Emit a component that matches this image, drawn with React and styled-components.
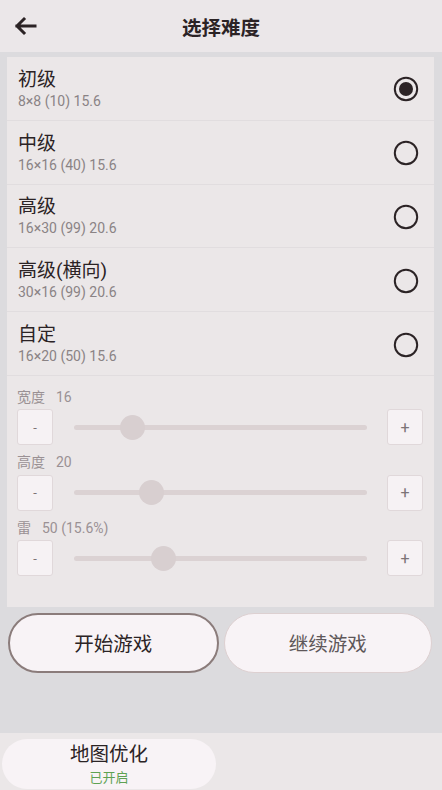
import React from "react";
import styled, { createGlobalStyle } from "styled-components";

const Global = createGlobalStyle`
  html, body { margin: 0; padding: 0; background: #dcdbde; }
  body { font-family: Roboto, "Noto Sans CJK SC", sans-serif; }
  * { box-sizing: border-box; }
`;

const Page = styled.div`
  width: 442px;
  height: 790px;
  display: flex;
  flex-direction: column;
  background: #dcdbde;
  overflow: hidden;
`;

const Header = styled.div`
  height: 52px;
  flex: none;
  background: #ebe7e9;
  display: grid;
  grid-template-columns: 60px 1fr 60px;
  align-items: center;
`;

const Back = styled.div`
  display: flex;
  align-items: center;
  padding-left: 13px;
`;

const Title = styled.div`
  text-align: center;
  font-family: "Noto Sans CJK SC", sans-serif;
  font-weight: 700;
  font-size: 19.5px;
  color: #2b2325;
`;

const Card = styled.div`
  margin: 5px 8px 0 7px;
  background: #ebe7e8;
  display: flex;
  flex-direction: column;
`;

const Row = styled.div`
  height: 63.8px;
  display: flex;
  align-items: center;
  justify-content: space-between;
  padding: 2px 15px 0 11px;
  border-bottom: 1.5px solid #e1dddf;
`;

const RowText = styled.div`
  display: flex;
  flex-direction: column;
  gap: 1px;
`;

const RowTitle = styled.div`
  font-family: Roboto, "Noto Sans CJK SC", sans-serif;
  font-size: 19px;
  line-height: 22px;
  color: #2b2325;
`;

const RowSub = styled.div`
  font-family: Roboto, "Noto Sans CJK SC", sans-serif;
  font-size: 14px;
  line-height: 18px;
  color: #8a8385;
`;

const Sliders = styled.div`
  height: 231px;
  padding: 11px 11px 0 10px;
  display: flex;
  flex-direction: column;
`;

const SliderBlock = styled.div`
  display: flex;
  flex-direction: column;
  margin-bottom: 6.5px;
`;

const SliderLabel = styled.div`
  font-family: Roboto, "Noto Sans CJK SC", sans-serif;
  font-size: 14px;
  line-height: 20px;
  color: #9a9194;
  height: 22px;
  display: flex;
  gap: 11px;
`;

const SliderRow = styled.div`
  display: flex;
  align-items: center;
  height: 37px;
`;

const StepBtn = styled.div`
  width: 36px;
  height: 36px;
  flex: none;
  background: #f6f2f4;
  border: 1px solid #e0d8da;
  border-radius: 3px;
  display: flex;
  align-items: center;
  justify-content: center;
  font-family: Roboto, sans-serif;
  font-size: ${(p) => (p.$plus ? "16px" : "13px")};
  color: #7c7476;
`;

const Track = styled.div`
  position: relative;
  flex: 1;
  margin: 0 20px 0 21px;
  height: 5px;
  border-radius: 3px;
  background: #dbd2d3;
`;

const Thumb = styled.div`
  position: absolute;
  top: 50%;
  width: 25px;
  height: 25px;
  margin-left: -12.5px;
  margin-top: -12.5px;
  border-radius: 50%;
  background: #d8cfd0;
`;

const Buttons = styled.div`
  display: flex;
  gap: 5px;
  padding: 6px 10px 0 8px;
`;

const BigBtn = styled.div`
  flex: 1;
  height: 60px;
  border-radius: 30px;
  background: #f8f3f6;
  border: ${(p) => (p.$primary ? "2px solid #8b7c7b" : "1.5px solid #ddd0d1")};
  display: flex;
  align-items: center;
  justify-content: center;
  font-family: "Noto Sans CJK SC", sans-serif;
  font-size: 19.5px;
  color: ${(p) => (p.$primary ? "#2b2325" : "#5e5759")};
`;

const BottomBar = styled.div`
  margin-top: auto;
  height: 57px;
  background: #ebe7e8;
  padding: 6px 0 0 2px;
`;

const Pill = styled.div`
  width: 214px;
  height: 50px;
  border-radius: 25px;
  background: #f8f3f6;
  display: flex;
  flex-direction: column;
  align-items: center;
  justify-content: flex-start;
  padding-top: 4px;
  gap: 6px;
`;

const PillTitle = styled.div`
  font-family: "Noto Sans CJK SC", sans-serif;
  font-size: 19.5px;
  line-height: 20px;
  color: #2b2325;
`;

const PillSub = styled.div`
  font-family: "Noto Sans CJK SC", sans-serif;
  font-size: 13px;
  line-height: 15px;
  color: #5ea253;
`;

const Radio = ({ checked }) => (
  <svg width="26" height="26" viewBox="0 0 26 26">
    <circle cx="13" cy="13" r="11.2" fill="none" stroke="#2b2325" strokeWidth="2" />
    {checked && <circle cx="13" cy="13" r="7" fill="#2b2325" />}
  </svg>
);

const levels = [
  { name: "初级", info: "8×8 (10) 15.6", checked: true },
  { name: "中级", info: "16×16 (40) 15.6" },
  { name: "高级", info: "16×30 (99) 20.6" },
  { name: "高级(横向)", info: "30×16 (99) 20.6" },
  { name: "自定", info: "16×20 (50) 15.6" },
];

const sliders = [
  { label: "宽度", value: "16", pos: 0.2 },
  { label: "高度", value: "20", pos: 0.265 },
  { label: "雷", value: "50 (15.6%)", pos: 0.307 },
];

export default function App() {
  return (
    <>
      <Global />
      <Page>
        <Header>
          <Back>
            <svg width="24" height="20" viewBox="0 0 24 20">
              <path d="M22 10H4M11 3L4 10l7 7" fill="none" stroke="#2b2325" strokeWidth="3" strokeLinecap="square" />
            </svg>
          </Back>
          <Title>选择难度</Title>
          <div />
        </Header>
        <Card>
          {levels.map((l) => (
            <Row key={l.name}>
              <RowText>
                <RowTitle>{l.name}</RowTitle>
                <RowSub>{l.info}</RowSub>
              </RowText>
              <Radio checked={l.checked} />
            </Row>
          ))}
          <Sliders>
            {sliders.map((s) => (
              <SliderBlock key={s.label}>
                <SliderLabel>
                  <span>{s.label}</span>
                  <span>{s.value}</span>
                </SliderLabel>
                <SliderRow>
                  <StepBtn>-</StepBtn>
                  <Track>
                    <Thumb style={{ left: `${s.pos * 100}%` }} />
                  </Track>
                  <StepBtn $plus>+</StepBtn>
                </SliderRow>
              </SliderBlock>
            ))}
          </Sliders>
        </Card>
        <Buttons>
          <BigBtn $primary>开始游戏</BigBtn>
          <BigBtn>继续游戏</BigBtn>
        </Buttons>
        <BottomBar>
          <Pill>
            <PillTitle>地图优化</PillTitle>
            <PillSub>已开启</PillSub>
          </Pill>
        </BottomBar>
      </Page>
    </>
  );
}
